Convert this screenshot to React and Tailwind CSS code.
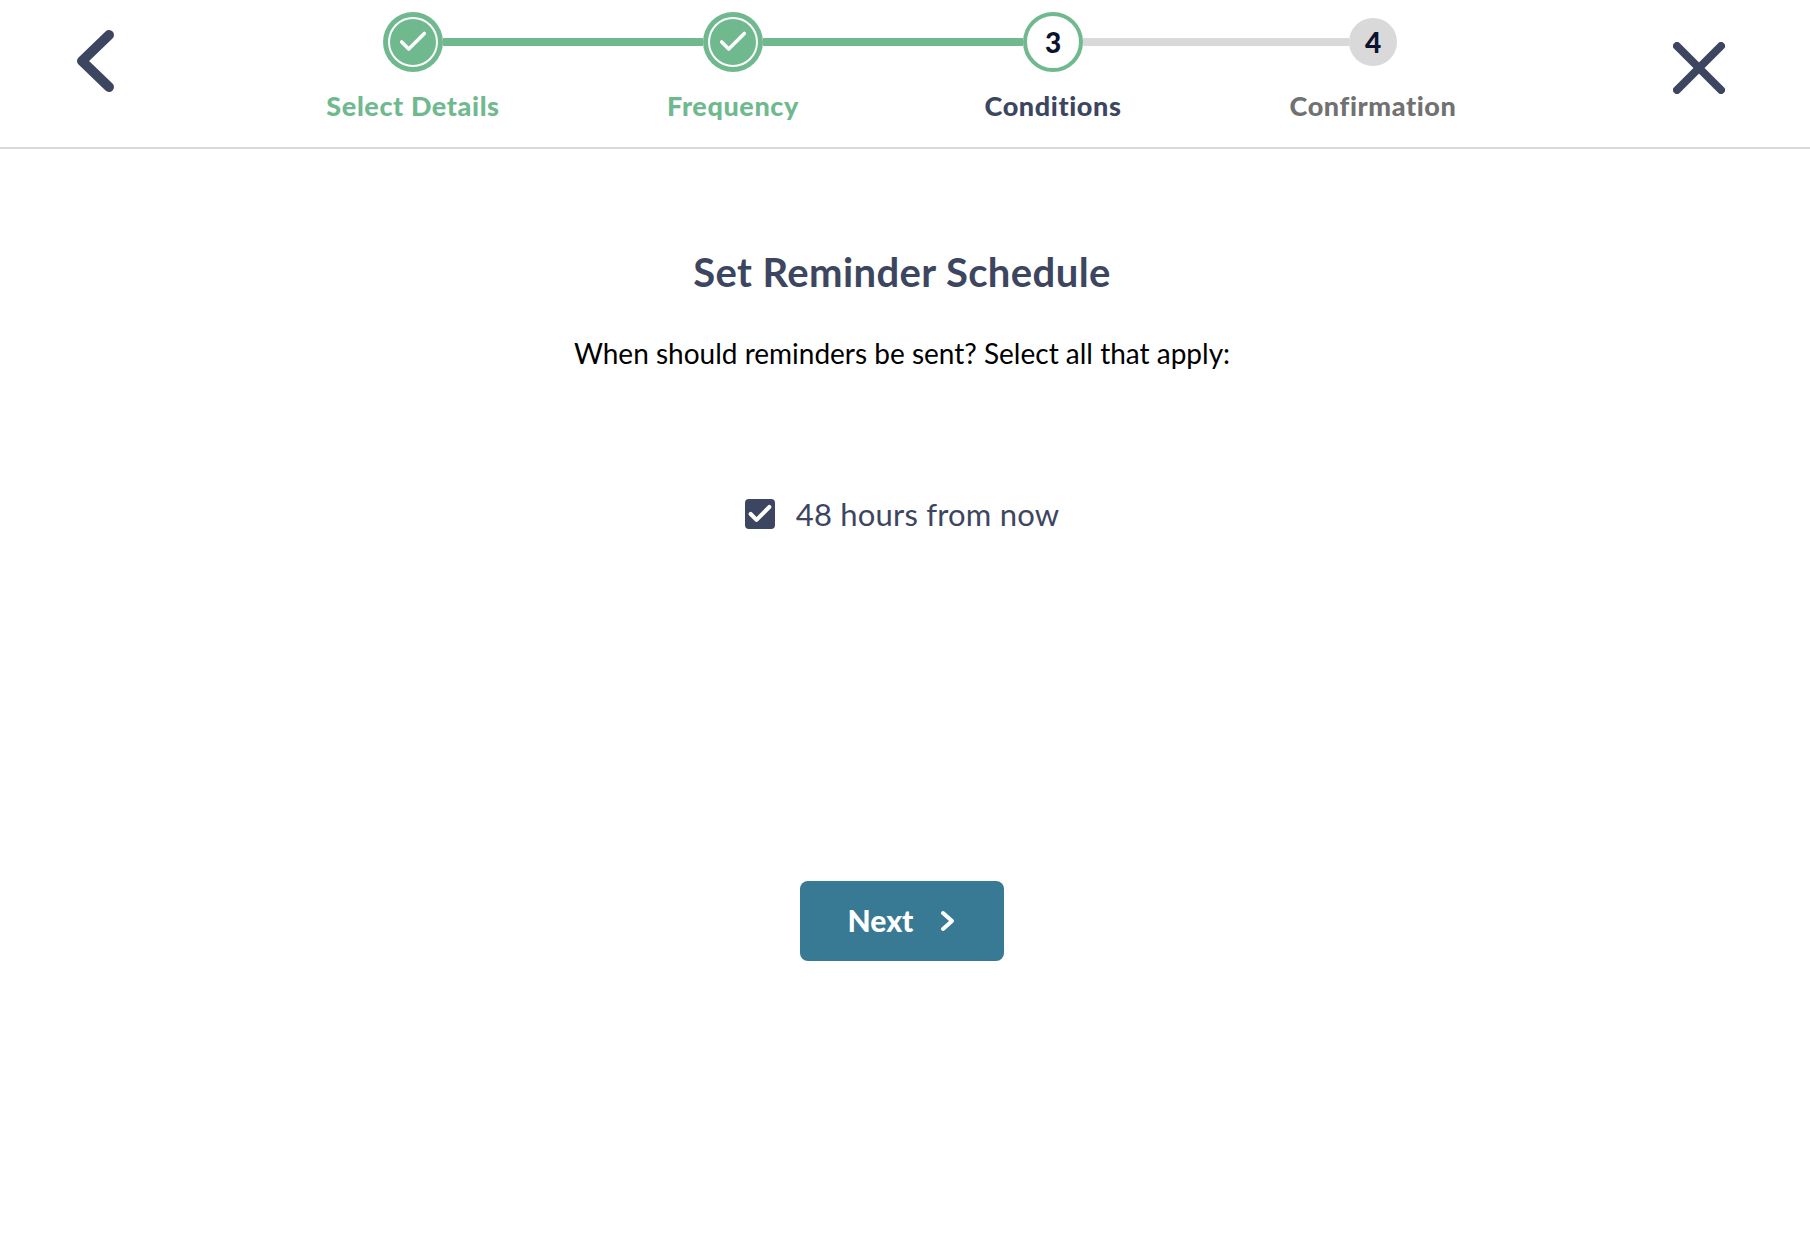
import { Check } from 'lucide-react';

const steps = [
  { label: 'Select Details', state: 'done' },
  { label: 'Frequency', state: 'done' },
  { label: 'Conditions', state: 'current', num: 3 },
  { label: 'Confirmation', state: 'todo', num: 4 },
];

const Step = ({ step, index }) => {
  const { label, state, num } = step;
  const leftLine = index === 0 ? 'bg-transparent' : state === 'todo' ? 'bg-[#d9d9d9]' : 'bg-[#70b98f]';
  const rightLine = index === 3 ? 'bg-transparent' : state === 'done' ? 'bg-[#70b98f]' : 'bg-[#d9d9d9]';
  const labelColor = state === 'done' ? 'text-[#70b98f]' : state === 'current' ? 'text-[#3d4660]' : 'text-[#717171]';

  return (
    <div className="w-[320px] flex flex-col items-center">
      <div className="w-full h-[60px] flex items-center">
        <div className={`flex-1 h-2 ${leftLine}`} />
        {state === 'done' && (
          <div className="w-[60px] h-[60px] rounded-full bg-[#70b98f] flex items-center justify-center">
            <div className="w-[50px] h-[50px] rounded-full border-2 border-white flex items-center justify-center">
              <Check size={34} strokeWidth={2.5} className="text-white" />
            </div>
          </div>
        )}
        {state === 'current' && (
          <div className="w-[60px] h-[60px] rounded-full border-[4px] border-[#70b98f] bg-white flex items-center justify-center text-[28px] font-black text-[#0b1330]">
            {num}
          </div>
        )}
        {state === 'todo' && (
          <div className="w-[48px] h-[48px] rounded-full bg-[#d9d9d9] flex items-center justify-center text-[28px] font-black text-[#0b1330]">
            {num}
          </div>
        )}
        <div className={`flex-1 h-2 ${rightLine}`} />
      </div>
      <div className={`mt-[16px] text-[27px] tracking-[0.6px] leading-[36px] font-black whitespace-nowrap ${labelColor}`}>{label}</div>
    </div>
  );
};

export default function App() {
  return (
    <div className="min-h-[1236px] bg-white font-['Lato','Liberation_Sans',sans-serif]">
      <header className="h-[149px] border-b-2 border-[#d9d9d9] flex items-start">
        <button className="w-[253px] pl-[76px] pt-[30px] flex-none">
          <svg width="38" height="62" viewBox="0 0 38 62" fill="none" stroke="#3d4660" strokeWidth="10" strokeLinecap="round" strokeLinejoin="round">
            <polyline points="33,5 6,31 33,57" />
          </svg>
        </button>
        <nav className="flex pt-[12px]">
          {steps.map((step, i) => (
            <Step key={step.label} step={step} index={i} />
          ))}
        </nav>
        <button className="ml-[140px] pt-[42px] flex-none">
          <svg width="52" height="52" viewBox="0 0 52 52" fill="none" stroke="#3d4660" strokeWidth="8" strokeLinecap="round">
            <path d="M4 4 L48 48 M48 4 L4 48" />
          </svg>
        </button>
      </header>

      <main className="pr-[6px] flex flex-col items-center">
        <h1 className="mt-[98px] text-[40px] tracking-[0.4px] leading-[50px] font-bold text-[#3d4660]">Set Reminder Schedule</h1>
        <p className="mt-[38px] text-[28px] leading-[36px] text-black">When should reminders be sent? Select all that apply:</p>
        <label className="mt-[123px] flex items-center gap-[21px] text-[31px] tracking-[0.2px] leading-[40px] text-[#3d4660]">
          <span className="w-[30px] h-[30px] rounded-[4px] bg-[#3d4660] flex items-center justify-center">
            <Check size={28} strokeWidth={3.5} className="text-white" />
          </span>
          48 hours from now
        </label>
        <button className="mt-[347px] w-[204px] h-[80px] rounded-[8px] bg-[#387993] text-white text-[30px] font-black flex items-center justify-center gap-[27px]">
          <span className="-mt-[2px]">Next</span>
          <svg width="16" height="22" viewBox="0 0 16 22" fill="none" stroke="white" strokeWidth="4" strokeLinecap="round" strokeLinejoin="round">
            <polyline points="3,3 12,11 3,19" />
          </svg>
        </button>
      </main>
    </div>
  );
}
